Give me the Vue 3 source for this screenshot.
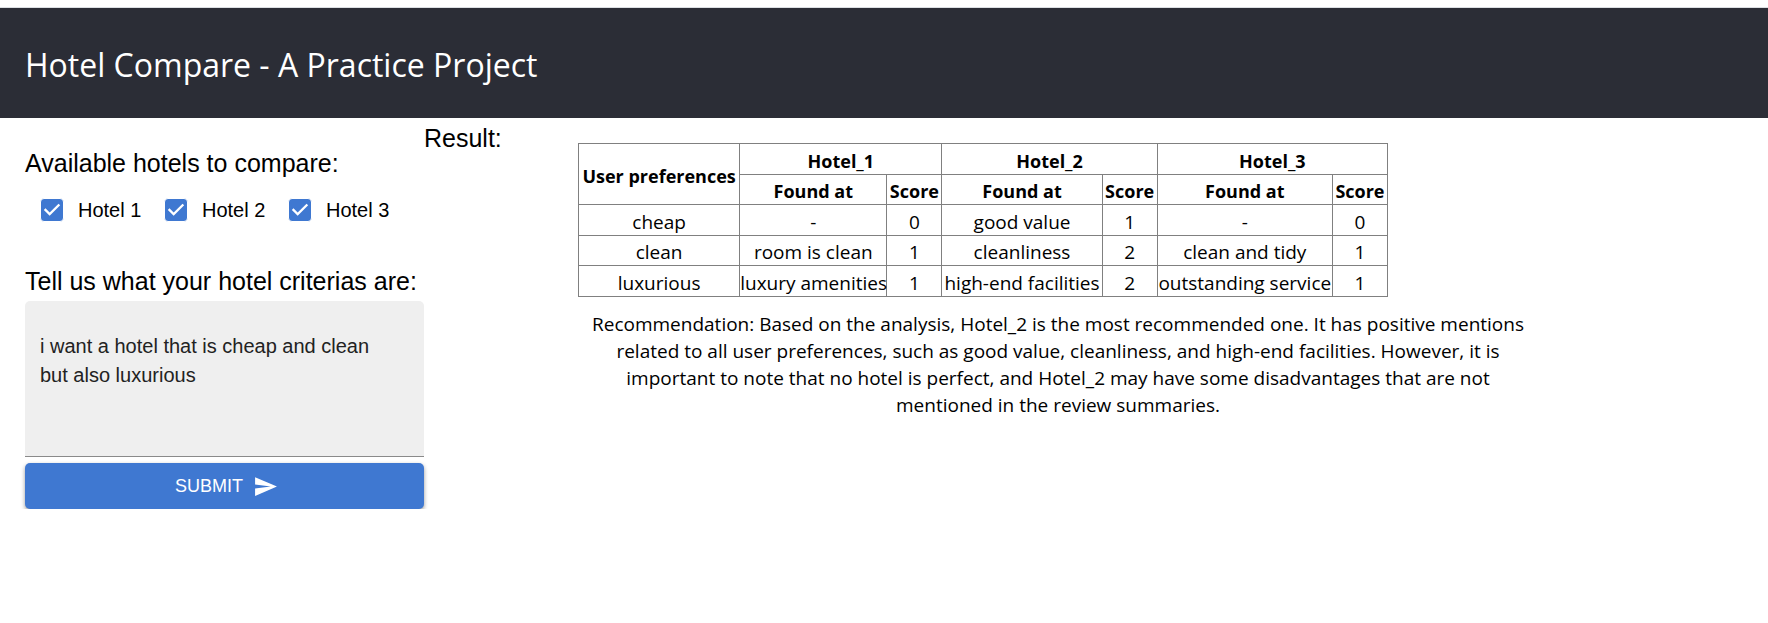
<script setup>
import { reactive, ref } from 'vue'

const hotels = reactive([
  { id: 'hotel-1', label: 'Hotel 1', checked: true },
  { id: 'hotel-2', label: 'Hotel 2', checked: true },
  { id: 'hotel-3', label: 'Hotel 3', checked: true },
])

const criteria = ref('i want a hotel that is cheap and clean but also luxurious')

const columns = ['Hotel_1', 'Hotel_2', 'Hotel_3']
const rows = [
  { preference: 'cheap', cells: ['-', 0, 'good value', 1, '-', 0] },
  { preference: 'clean', cells: ['room is clean', 1, 'cleanliness', 2, 'clean and tidy', 1] },
  { preference: 'luxurious', cells: ['luxury amenities', 1, 'high-end facilities', 2, 'outstanding service', 1] },
]
</script>

<template>
  <div class="page">
    <header class="header">
      <h1>Hotel Compare - A Practice Project</h1>
    </header>
    <main class="main">
      <form class="form" @submit.prevent>
        <fieldset class="hotels">
          <legend class="heading">Available hotels to compare:</legend>
          <div class="options">
            <label v-for="hotel in hotels" :key="hotel.id" class="option" :for="hotel.id">
              <span class="tick">
                <input :id="hotel.id" v-model="hotel.checked" type="checkbox" />
                <svg viewBox="0 0 24 24" aria-hidden="true">
                  <path d="M10 17l-5-5 1.41-1.41L10 14.17l7.59-7.59L19 8l-9 9z" />
                </svg>
              </span>
              {{ hotel.label }}
            </label>
          </div>
        </fieldset>
        <label class="heading" for="criteria">Tell us what your hotel criterias are:</label>
        <textarea id="criteria" v-model="criteria" class="criteria"></textarea>
        <button class="submit" type="submit">
          SUBMIT
          <svg viewBox="0 0 24 24" aria-hidden="true">
            <path d="M2.01 21 23 12 2.01 3 2 10l15 2-15 2z" />
          </svg>
        </button>
      </form>
      <h2 class="heading result-heading">Result:</h2>
      <section class="result">
        <table>
          <colgroup>
            <col class="preference" />
            <col class="found-1" />
            <col class="score" />
            <col class="found-2" />
            <col class="score" />
            <col class="found-3" />
            <col class="score" />
          </colgroup>
          <thead>
            <tr>
              <th rowspan="2" scope="col">User preferences</th>
              <th v-for="name in columns" :key="name" colspan="2" scope="colgroup">{{ name }}</th>
            </tr>
            <tr>
              <template v-for="name in columns" :key="name">
                <th scope="col">Found at</th>
                <th scope="col">Score</th>
              </template>
            </tr>
          </thead>
          <tbody>
            <tr v-for="row in rows" :key="row.preference">
              <td>{{ row.preference }}</td>
              <td v-for="(cell, i) in row.cells" :key="i">{{ cell }}</td>
            </tr>
          </tbody>
        </table>
        <p class="recommendation">
          Recommendation: Based on the analysis, Hotel_2 is the most recommended one. It has positive
          mentions related to all user preferences, such as good value, cleanliness, and high-end
          facilities. However, it is important to note that no hotel is perfect, and Hotel_2 may have
          some disadvantages that are not mentioned in the review summaries.
        </p>
      </section>
    </main>
  </div>
</template>

<style>
body {
  margin: 0;
  background: #fff;
}
</style>

<style scoped>
* {
  box-sizing: border-box;
}

.page {
  padding-top: 7px;
  font-family: "Liberation Sans", Arial, sans-serif;
  font-size: 20px;
  color: #000;
}

.header {
  display: flex;
  align-items: center;
  min-height: 111px;
  padding: 4px 25px 0;
  border-top: 1px solid #dcdfe3;
  background: #2b2d36;
  color: #fff;
}

h1 {
  margin: 0;
  font: 400 32px/40px "Open Sans", "Noto Sans", sans-serif;
}

.main {
  display: flex;
  align-items: flex-start;
  padding-left: 25px;
}

.form {
  display: flex;
  flex-direction: column;
  flex: 0 0 399px;
  padding-top: 25px;
}

.heading {
  margin: 0;
  padding: 0;
  font-size: 25px;
  font-weight: 400;
  line-height: 40px;
  white-space: nowrap;
}

.hotels {
  min-width: 0;
  margin: 0 0 24px;
  padding: 0;
  border: 0;
}

.options {
  display: flex;
  gap: 20px;
  height: 54px;
  padding-left: 15px;
}

.option {
  display: flex;
  align-items: center;
  gap: 14px;
  width: 104px;
  white-space: nowrap;
}

.tick {
  display: grid;
  flex: none;
}

.tick input,
.tick svg {
  grid-area: 1 / 1;
}

.tick input {
  appearance: none;
  width: 24px;
  height: 24px;
  margin: 0;
  border: 1px solid #fff;
  border-radius: 4px;
  background: #3f78d1;
}

.tick svg {
  width: 28px;
  height: 28px;
  margin: -2px;
  fill: #fff;
  pointer-events: none;
}

.tick input:not(:checked) {
  border: 2px solid #666;
  background: #fff;
}

.criteria {
  display: block;
  width: 100%;
  height: 156px;
  padding: 31px 30px 10px 15px;
  border: 0;
  border-bottom: 1px solid #8a8a8a;
  border-radius: 5px 5px 0 0;
  background: #efefef;
  color: #222;
  font: inherit;
  line-height: 29px;
  resize: none;
}

.submit {
  display: flex;
  align-items: center;
  justify-content: center;
  gap: 10px;
  height: 46px;
  margin-top: 6px;
  padding: 0 20px 0 24px;
  border: 0;
  border-radius: 5px;
  background: #3f78d1;
  box-shadow: 0 2px 4px rgba(0, 0, 0, 0.4);
  color: #fff;
  font: 400 18px/30px "Liberation Sans", Arial, sans-serif;
}

.submit svg {
  width: 25px;
  height: 25px;
  fill: #fff;
}

.result-heading {
  flex: 0 0 154px;
}

.result {
  flex: 0 1 960px;
  padding-top: 25px;
  font: 400 19px/27px "Open Sans", "Noto Sans", sans-serif;
  text-align: center;
}

table {
  width: 810px;
  table-layout: fixed;
  border-collapse: collapse;
  line-height: 25px;
}

th,
td {
  padding: 4px 0 0;
  border: 1px solid #808080;
  white-space: nowrap;
}

tr:nth-child(odd) > * {
  padding-top: 5px;
}

th {
  font-size: 18px;
  font-weight: 700;
}

.preference {
  width: 161px;
}

.found-1 {
  width: 147px;
}

.found-2 {
  width: 160px;
}

.found-3 {
  width: 175px;
}

.score {
  width: 55px;
}

.recommendation {
  margin: 14px 0 0;
  padding: 0 10px;
}
</style>
